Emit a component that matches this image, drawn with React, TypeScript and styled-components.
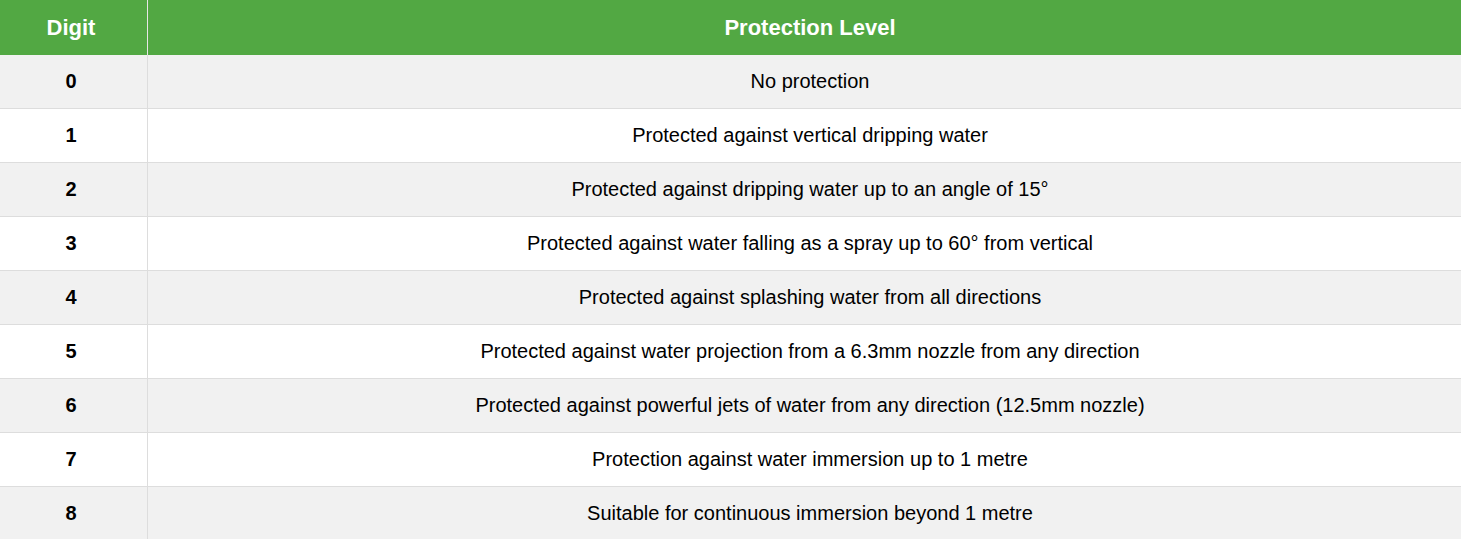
import styled, { createGlobalStyle } from "styled-components";

const GlobalStyle = createGlobalStyle`
  body {
    margin: 0;
    font-family: "Liberation Sans", Arial, sans-serif;
    background: #ffffff;
  }
`;

const Table = styled.table`
  width: 100%;
  border-collapse: collapse;
  table-layout: fixed;
`;

const HeadCell = styled.th<{ $narrow?: boolean }>`
  width: ${(props) => (props.$narrow ? "142px" : "auto")};
  height: 55px;
  padding: ${(props) => (props.$narrow ? "0 5px 0 0" : "0 0 0 11px")};
  background-color: #52a843;
  color: #ffffff;
  font-size: 22px;
  font-weight: bold;
  text-align: center;
  border-left: 1px solid #e6e6e6;
  &:first-child {
    border-left: none;
  }
`;

const Row = styled.tr<{ $striped: boolean }>`
  background-color: ${(props) => (props.$striped ? "#f1f1f1" : "#ffffff")};
  border-bottom: 1px solid #dddddd;
`;

const DigitCell = styled.td`
  height: 53px;
  padding: 0 5px 0 0;
  text-align: center;
  font-size: 20px;
  font-weight: bold;
  color: #000000;
  border-right: 1px solid #dddddd;
`;

const LevelCell = styled.td`
  height: 53px;
  padding: 0 0 0 11px;
  text-align: center;
  font-size: 20px;
  color: #000000;
`;

const levels = [
  "No protection",
  "Protected against vertical dripping water",
  "Protected against dripping water up to an angle of 15°",
  "Protected against water falling as a spray up to 60° from vertical",
  "Protected against splashing water from all directions",
  "Protected against water projection from a 6.3mm nozzle from any direction",
  "Protected against powerful jets of water from any direction (12.5mm nozzle)",
  "Protection against water immersion up to 1 metre",
  "Suitable for continuous immersion beyond 1 metre",
];

const App: React.FC = () => {
  return (
    <>
      <GlobalStyle />
      <Table>
        <thead>
          <tr>
            <HeadCell $narrow>Digit</HeadCell>
            <HeadCell>Protection Level</HeadCell>
          </tr>
        </thead>
        <tbody>
          {levels.map((text, i) => (
            <Row key={i} $striped={i % 2 === 0}>
              <DigitCell>{i}</DigitCell>
              <LevelCell>{text}</LevelCell>
            </Row>
          ))}
        </tbody>
      </Table>
    </>
  );
};

export default App;
